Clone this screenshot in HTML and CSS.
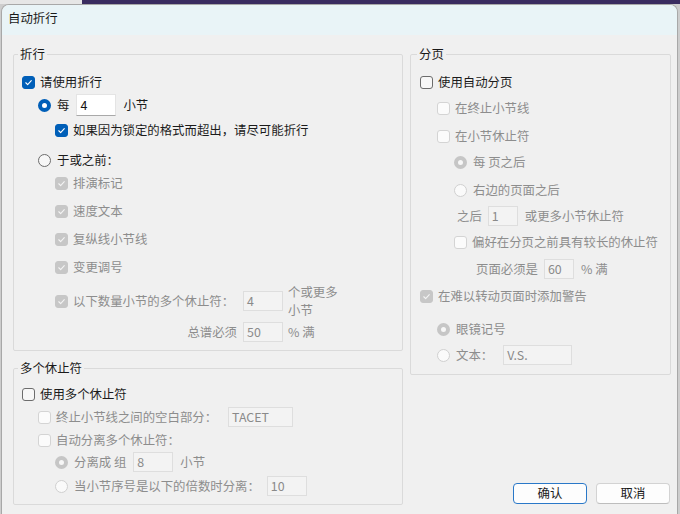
FILE: index.html
```html
<!DOCTYPE html>
<html lang="zh-CN">
<head>
<meta charset="utf-8">
<title>自动折行</title>
<link rel="stylesheet" href="styles.css">
</head>
<body>
<div class="desk"></div>
<div class="window">
  <div class="titlebar">自动折行</div>
  <div class="content">
    <div class="col col-left">
      <fieldset class="group g-wrap">
        <legend>折行</legend>
        <div class="row">
          <span class="cb on"><svg viewBox="0 0 13 13"><polyline points="3.3,6.8 5.5,9 9.8,4.2"/></svg></span><span>请使用折行</span>
        </div>
        <div class="row m1 i16">
          <span class="rb on"></span><span>每</span><span class="field act w40">4</span><span>小节</span>
        </div>
        <div class="row m3 i33">
          <span class="cb on"><svg viewBox="0 0 13 13"><polyline points="3.3,6.8 5.5,9 9.8,4.2"/></svg></span><span>如果因为锁定的格式而超出，请尽可能折行</span>
        </div>
        <div class="row m8 i16">
          <span class="rb"></span><span>于或之前：</span>
        </div>
        <div class="row m1 i33 dis">
          <span class="cb dis on"><svg viewBox="0 0 13 13"><polyline points="3.3,6.8 5.5,9 9.8,4.2"/></svg></span><span>排演标记</span>
        </div>
        <div class="row m6 i33 dis">
          <span class="cb dis on"><svg viewBox="0 0 13 13"><polyline points="3.3,6.8 5.5,9 9.8,4.2"/></svg></span><span>速度文本</span>
        </div>
        <div class="row m6 i33 dis">
          <span class="cb dis on"><svg viewBox="0 0 13 13"><polyline points="3.3,6.8 5.5,9 9.8,4.2"/></svg></span><span>复纵线小节线</span>
        </div>
        <div class="row m6 i33 dis">
          <span class="cb dis on"><svg viewBox="0 0 13 13"><polyline points="3.3,6.8 5.5,9 9.8,4.2"/></svg></span><span>变更调号</span>
        </div>
        <div class="pair m5 i33 dis">
          <div class="pair-label">
            <span class="cb dis on"><svg viewBox="0 0 13 13"><polyline points="3.3,6.8 5.5,9 9.8,4.2"/></svg></span><span>以下数量小节的多个休止符：</span>
          </div>
          <span class="field w40 flat">4</span>
          <span class="suffix two">个或更多<br>小节</span>
          <span class="pair-right">总谱必须</span>
          <span class="field w40 flat">50</span>
          <span class="suffix">% 满</span>
        </div>
      </fieldset>

      <fieldset class="group g-multi">
        <legend>多个休止符</legend>
        <div class="row">
          <span class="cb"></span><span>使用多个休止符</span>
        </div>
        <div class="row m1 i16 dis">
          <span class="cb dis"></span><span>终止小节线之间的空白部分：</span><span class="field w65 ml11">TACET</span>
        </div>
        <div class="row m1 i16 dis">
          <span class="cb dis"></span><span>自动分离多个休止符：</span>
        </div>
        <div class="row i33 dis">
          <span class="rb dis on"></span><span>分离成 组</span><span class="field w40">8</span><span>小节</span>
        </div>
        <div class="row m2 i33 dis">
          <span class="rb dis"></span><span>当小节序号是以下的倍数时分离：</span><span class="field w40 ml7">10</span>
        </div>
      </fieldset>
    </div>

    <div class="col col-right">
      <fieldset class="group g-page">
        <legend>分页</legend>
        <div class="row">
          <span class="cb"></span><span>使用自动分页</span>
        </div>
        <div class="row m4 i17 dis">
          <span class="cb dis"></span><span>在终止小节线</span>
        </div>
        <div class="row m6 i17 dis">
          <span class="cb dis"></span><span>在小节休止符</span>
        </div>
        <div class="row m4 i34 dis">
          <span class="rb dis on"></span><span>每 页之后</span>
        </div>
        <div class="row m6 i34 dis">
          <span class="rb dis"></span><span>右边的页面之后</span>
        </div>
        <div class="row m4 i37 dis">
          <span>之后</span><span class="field w30 tight">1</span><span>或更多小节休止符</span>
        </div>
        <div class="row m4 i34 dis">
          <span class="cb dis"></span><span>偏好在分页之前具有较长的休止符</span>
        </div>
        <div class="row m5 i56 dis">
          <span>页面必须是</span><span class="field w30 tight">60</span><span>% 满</span>
        </div>
        <div class="row m5 dis">
          <span class="cb dis on"><svg viewBox="0 0 13 13"><polyline points="3.3,6.8 5.5,9 9.8,4.2"/></svg></span><span>在难以转动页面时添加警告</span>
        </div>
        <div class="row m11 i17 dis">
          <span class="rb dis on"></span><span>眼镜记号</span>
        </div>
        <div class="row m4 i17 dis">
          <span class="rb dis"></span><span>文本：</span><span class="field w69 ml10">V.S.</span>
        </div>
      </fieldset>
      <div class="buttons">
        <button class="btn primary" type="button">确认</button>
        <button class="btn" type="button">取消</button>
      </div>
    </div>
  </div>
</div>
</body>
</html>
```

FILE: styles.css
```css
* { box-sizing: border-box; }
html, body { margin: 0; padding: 0; }
body {
  width: 680px;
  height: 514px;
  overflow: hidden;
  background: #cdcdcd;
  font-family: "Noto Sans CJK SC", "Noto Sans", sans-serif;
  font-size: 12.4px;
  color: #1b1b1b;
}
.desk {
  height: 4px;
  background: linear-gradient(to right, #e6e6e6 0, #e6e6e6 82px, #3a2c60 82px);
}
.window {
  margin-left: 1px;
  width: 677px;
  height: 510px;
  background: #f0f0f0;
  border: 1px solid #a8a8a8;
  border-bottom: 0;
  border-radius: 8px 8px 0 0;
  overflow: hidden;
}
.titlebar {
  height: 30px;
  background: #e9f4f7;
  padding: 0 0 4px 6px;
  line-height: 26px;
  color: #1a1a1a;
}
.content {
  display: grid;
  grid-template-columns: 390px 261px;
  column-gap: 7px;
  padding: 11px 6px 0 11px;
}
.col { display: flex; flex-direction: column; }
.group {
  margin: 0;
  border: 1px solid #dadada;
  border-radius: 2px;
  min-width: 0;
}
.group legend {
  padding: 0 2px;
  line-height: 16px;
  color: #1a1a1a;
}
.g-wrap { padding: 9px 8px 7px 8px; margin-bottom: 9px; }
.g-wrap legend, .g-multi legend { margin-left: -4px; }
.g-multi { padding: 7px 8px 7px 8px; }
.g-page { padding: 9px 8px 8px 9px; }
.g-page legend { margin-left: -3px; }

.row {
  display: flex;
  align-items: center;
  height: 22px;
  white-space: nowrap;
}
.dis { color: #8d8d8d; }
.m1 { margin-top: 1px; }
.m2 { margin-top: 2px; }
.m3 { margin-top: 3px; }
.m4 { margin-top: 4px; }
.m5 { margin-top: 5px; }
.m6 { margin-top: 6px; }
.m8 { margin-top: 8px; }
.m11 { margin-top: 11px; }
.i16 { padding-left: 16px; }
.i17 { padding-left: 17px; }
.i33 { padding-left: 33px; }
.i34 { padding-left: 34px; }
.i37 { padding-left: 37px; }
.i56 { padding-left: 56px; }

/* checkbox */
.cb {
  flex: none;
  width: 13px;
  height: 13px;
  margin-right: 5px;
  border: 1px solid #6c6c6c;
  border-radius: 3px;
  background: #f7f7f7;
  display: inline-flex;
  align-items: center;
  justify-content: center;
}
.cb svg { width: 13px; height: 13px; display: block; }
.cb polyline { fill: none; stroke: #fff; stroke-width: 1.3; stroke-linecap: round; stroke-linejoin: round; }
.cb.on { background: #005fb8; border-color: #005fb8; }
.cb.dis { border-color: #d4d4d4; background: #fbfbfb; }
.cb.dis.on { background: #c7c7c7; border-color: #c7c7c7; }
.cb.dis.on polyline { stroke: #f4f4f4; }

/* radio */
.rb {
  flex: none;
  width: 13px;
  height: 13px;
  margin-right: 6px;
  border: 1px solid #6c6c6c;
  border-radius: 50%;
  background: #f7f7f7;
}
.rb.on { border: 4px solid #005fb8; background: #fff; }
.rb.dis { border-color: #d0d0d0; background: #fafafa; }
.rb.dis.on { border: 4px solid #c6c6c6; background: #f7f7f7; }

/* text fields */
.field {
  flex: none;
  height: 20px;
  margin: 0 7px;
  padding: 0 3px;
  line-height: 18px;
  border: 1px solid #dedede;
  background: #f3f3f3;
  color: #8a8a8a;
}
.field.act {
  height: 22px;
  line-height: 20px;
  background: #fff;
  border-color: #e4e4e4;
  border-bottom-color: #a9a9a9;
  color: #111;
}
.field.tight { margin: 0 7px 0 6px; }
.w30 { width: 30px; }
.w40 { width: 40px; }
.w65 { width: 65px; }
.w69 { width: 69px; }
.ml7 { margin-left: 7px; }
.ml10 { margin-left: 10px; }
.ml11 { margin-left: 11px; }
.field.flat { margin: 0; }

/* two-row grid for count / percentage */
.pair {
  display: grid;
  grid-template-columns: 188px 40px auto;
  grid-template-rows: 36px 22px;
  row-gap: 2px;
  align-items: center;
  white-space: nowrap;
}
.pair-label { display: flex; align-items: center; }
.pair-right { text-align: right; padding-right: 6px; }
.suffix { margin-left: 5px; }
.suffix.two { line-height: 18px; }

/* buttons */
.buttons {
  margin-top: auto;
  margin-bottom: 1px;
  margin-right: 1px;
  display: flex;
  justify-content: flex-end;
  gap: 9px;
}
.btn {
  width: 74px;
  height: 21px;
  padding: 0;
  border: 1px solid #d3d3d3;
  border-bottom-color: #bdbdbd;
  border-radius: 4px;
  background: #fdfdfd;
  font: inherit;
  line-height: 19px;
  color: #1a1a1a;
}
.btn.primary { border-color: #2a78c8; }
```
